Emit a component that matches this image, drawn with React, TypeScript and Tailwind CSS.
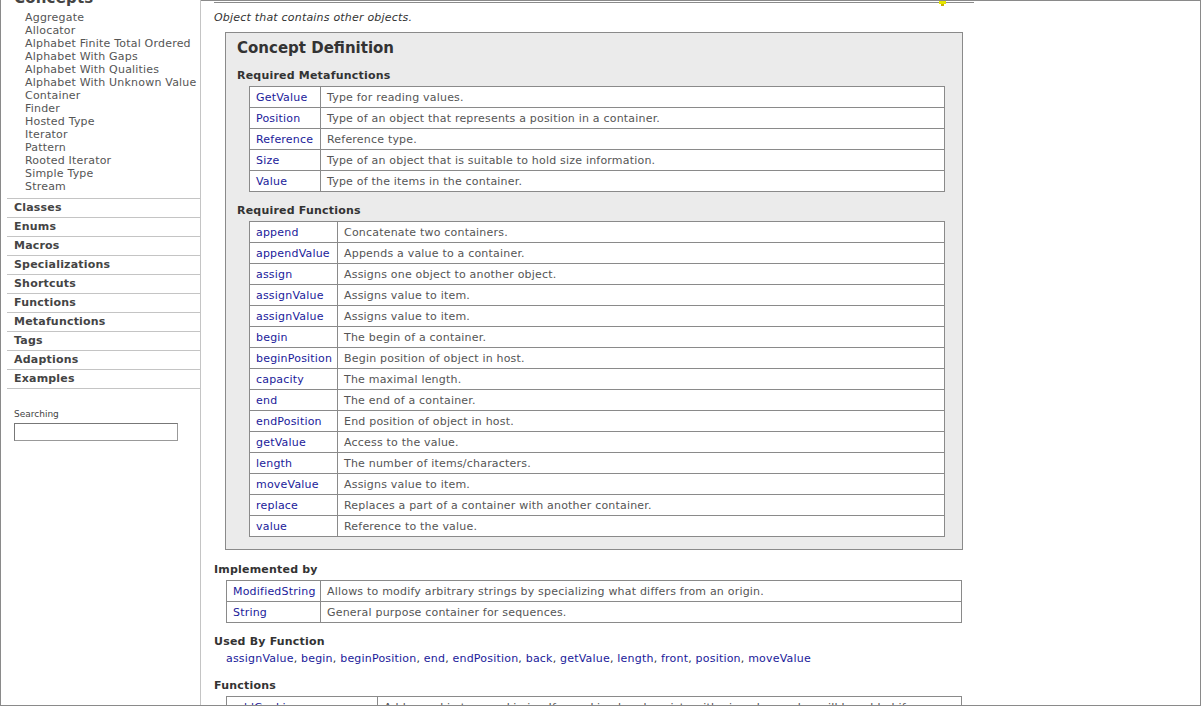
import React from 'react';

// Sidebar data
const CONCEPTS = [
  'Aggregate',
  'Allocator',
  'Alphabet Finite Total Ordered',
  'Alphabet With Gaps',
  'Alphabet With Qualities',
  'Alphabet With Unknown Value',
  'Container',
  'Finder',
  'Hosted Type',
  'Iterator',
  'Pattern',
  'Rooted Iterator',
  'Simple Type',
  'Stream',
];

const SECTIONS = [
  'Classes',
  'Enums',
  'Macros',
  'Specializations',
  'Shortcuts',
  'Functions',
  'Metafunctions',
  'Tags',
  'Adaptions',
  'Examples',
];

const METAFUNCTIONS = [
  ['GetValue', 'Type for reading values.'],
  ['Position', 'Type of an object that represents a position in a container.'],
  ['Reference', 'Reference type.'],
  ['Size', 'Type of an object that is suitable to hold size information.'],
  ['Value', 'Type of the items in the container.'],
];

const FUNCTIONS = [
  ['append', 'Concatenate two containers.'],
  ['appendValue', 'Appends a value to a container.'],
  ['assign', 'Assigns one object to another object.'],
  ['assignValue', 'Assigns value to item.'],
  ['assignValue', 'Assigns value to item.'],
  ['begin', 'The begin of a container.'],
  ['beginPosition', 'Begin position of object in host.'],
  ['capacity', 'The maximal length.'],
  ['end', 'The end of a container.'],
  ['endPosition', 'End position of object in host.'],
  ['getValue', 'Access to the value.'],
  ['length', 'The number of items/characters.'],
  ['moveValue', 'Assigns value to item.'],
  ['replace', 'Replaces a part of a container with another container.'],
  ['value', 'Reference to the value.'],
];

const IMPLEMENTED = [
  ['ModifiedString', 'Allows to modify arbitrary strings by specializing what differs from an origin.'],
  ['String', 'General purpose container for sequences.'],
];

const USED_BY = [
  'assignValue',
  'begin',
  'beginPosition',
  'end',
  'endPosition',
  'back',
  'getValue',
  'length',
  'front',
  'position',
  'moveValue',
];

const FONT = "font-['DejaVu_Sans','Verdana',sans-serif]";

interface DocTableProps {
  rows: string[][];
  firstCol: string;
}

const DocTable: React.FC<DocTableProps> = ({ rows, firstCol }) => (
  <div className="border border-[#8a8a8a] bg-white">
    {rows.map(([name, desc], i) => (
      <div
        key={i}
        className={`flex overflow-hidden ${i < rows.length - 1 ? 'h-[21px] border-b border-[#8a8a8a]' : 'h-[20px]'}`}
      >
        <div className={`${firstCol} shrink-0 border-r border-[#8a8a8a] pl-[6px] leading-[22px] text-[#1a1a9a]`}>
          {name}
        </div>
        <div className="flex-1 pl-[6px] leading-[22px] text-[#555] whitespace-nowrap overflow-hidden">
          {desc}
        </div>
      </div>
    ))}
  </div>
);

const Heading: React.FC<{ children: React.ReactNode; className?: string }> = ({ children, className }) => (
  <div className={`h-[14px] leading-[14px] font-bold text-[#333] ${className || ''}`}>{children}</div>
);

const Sidebar: React.FC = () => (
  <div className="w-[200px] shrink-0 border-r border-[#c4c4c4] h-full overflow-hidden">
    <div className="mt-[-11px] h-[18px] pl-[13px] text-[15px] leading-[18px] font-bold text-[#444]">
      Concepts
    </div>
    <div className="pt-[4px] pl-[24px]">
      {CONCEPTS.map((c) => (
        <div key={c} className="h-[13px] leading-[13px] text-[#555] whitespace-nowrap">
          {c}
        </div>
      ))}
    </div>
    <div className="mt-[5px] ml-[6px] border-t border-[#c4c4c4]">
      {SECTIONS.map((s) => (
        <div
          key={s}
          className="h-[19px] border-b border-[#c4c4c4] pl-[7px] leading-[18px] font-bold text-[#444]"
        >
          {s}
        </div>
      ))}
    </div>
    <div className="mt-[19px] pl-[13px] text-[9px] leading-[12px] tracking-normal text-[#444]">Searching</div>
    <div className="mt-[3px] ml-[13px] w-[164px] h-[18px] border border-[#999] border-t-[#777] border-l-[#777] bg-white" />
  </div>
);

export default function App() {
  return (
    <div
      className={`${FONT} text-[11px] tracking-[0.2px] w-[1201px] h-[706px] flex bg-white border-l border-r border-b border-[#8a8a8a] overflow-hidden`}
    >
      <Sidebar />
      <div className="flex-1 border-t border-[#8a8a8a] overflow-hidden">
        <div className="pl-[13px] w-[773px]">
          <div className="relative mt-[1px] h-[1px] bg-[#8a8a8a]">
            <div className="absolute left-[725px] top-[-1px] w-[7px] h-[3px] bg-[#e6e600]" />
            <div className="absolute left-[727px] top-[2px] w-[3px] h-[2px] bg-[#c8b400]" />
          </div>
          <p className="mt-[8px] h-[14px] leading-[14px] italic text-[#333]">
            Object that contains other objects.
          </p>

          <div className="mt-[7px] mx-[11px] border border-[#8a8a8a] bg-[#ebebeb] pt-[5px] pb-[12px] pl-[11px] pr-[17px]">
            <div className="h-[20px] leading-[20px] text-[15px] tracking-normal font-bold text-[#333]">
              Concept Definition
            </div>
            <Heading className="mt-[11px]">Required Metafunctions</Heading>
            <div className="mt-[3px] ml-[12px]">
              <DocTable rows={METAFUNCTIONS} firstCol="w-[71px]" />
            </div>
            <Heading className="mt-[12px]">Required Functions</Heading>
            <div className="mt-[3px] ml-[12px]">
              <DocTable rows={FUNCTIONS} firstCol="w-[88px]" />
            </div>
          </div>

          <Heading className="mt-[13px]">Implemented by</Heading>
          <div className="mt-[3px] mx-[12px]">
            <DocTable rows={IMPLEMENTED} firstCol="w-[94px]" />
          </div>

          <Heading className="mt-[12px]">Used By Function</Heading>
          <div className="mt-[3px] pl-[12px] h-[14px] leading-[14px] whitespace-nowrap">
            {USED_BY.map((f, i) => (
              <React.Fragment key={i}>
                <span className="text-[#1a1a9a]">{f}</span>
                {i < USED_BY.length - 1 && <span className="text-[#333]">, </span>}
              </React.Fragment>
            ))}
          </div>

          <Heading className="mt-[13px]">Functions</Heading>
          <div className="mt-[3px] mx-[12px]">
            <DocTable
              rows={[
                ['addCookie', 'Add a cookie to a cookie jar. If a cookie already exists with given key, value will be added if'],
                ['appendValue', 'Appends a value to a container.'],
              ]}
              firstCol="w-[151px]"
            />
          </div>
        </div>
      </div>
    </div>
  );
}
